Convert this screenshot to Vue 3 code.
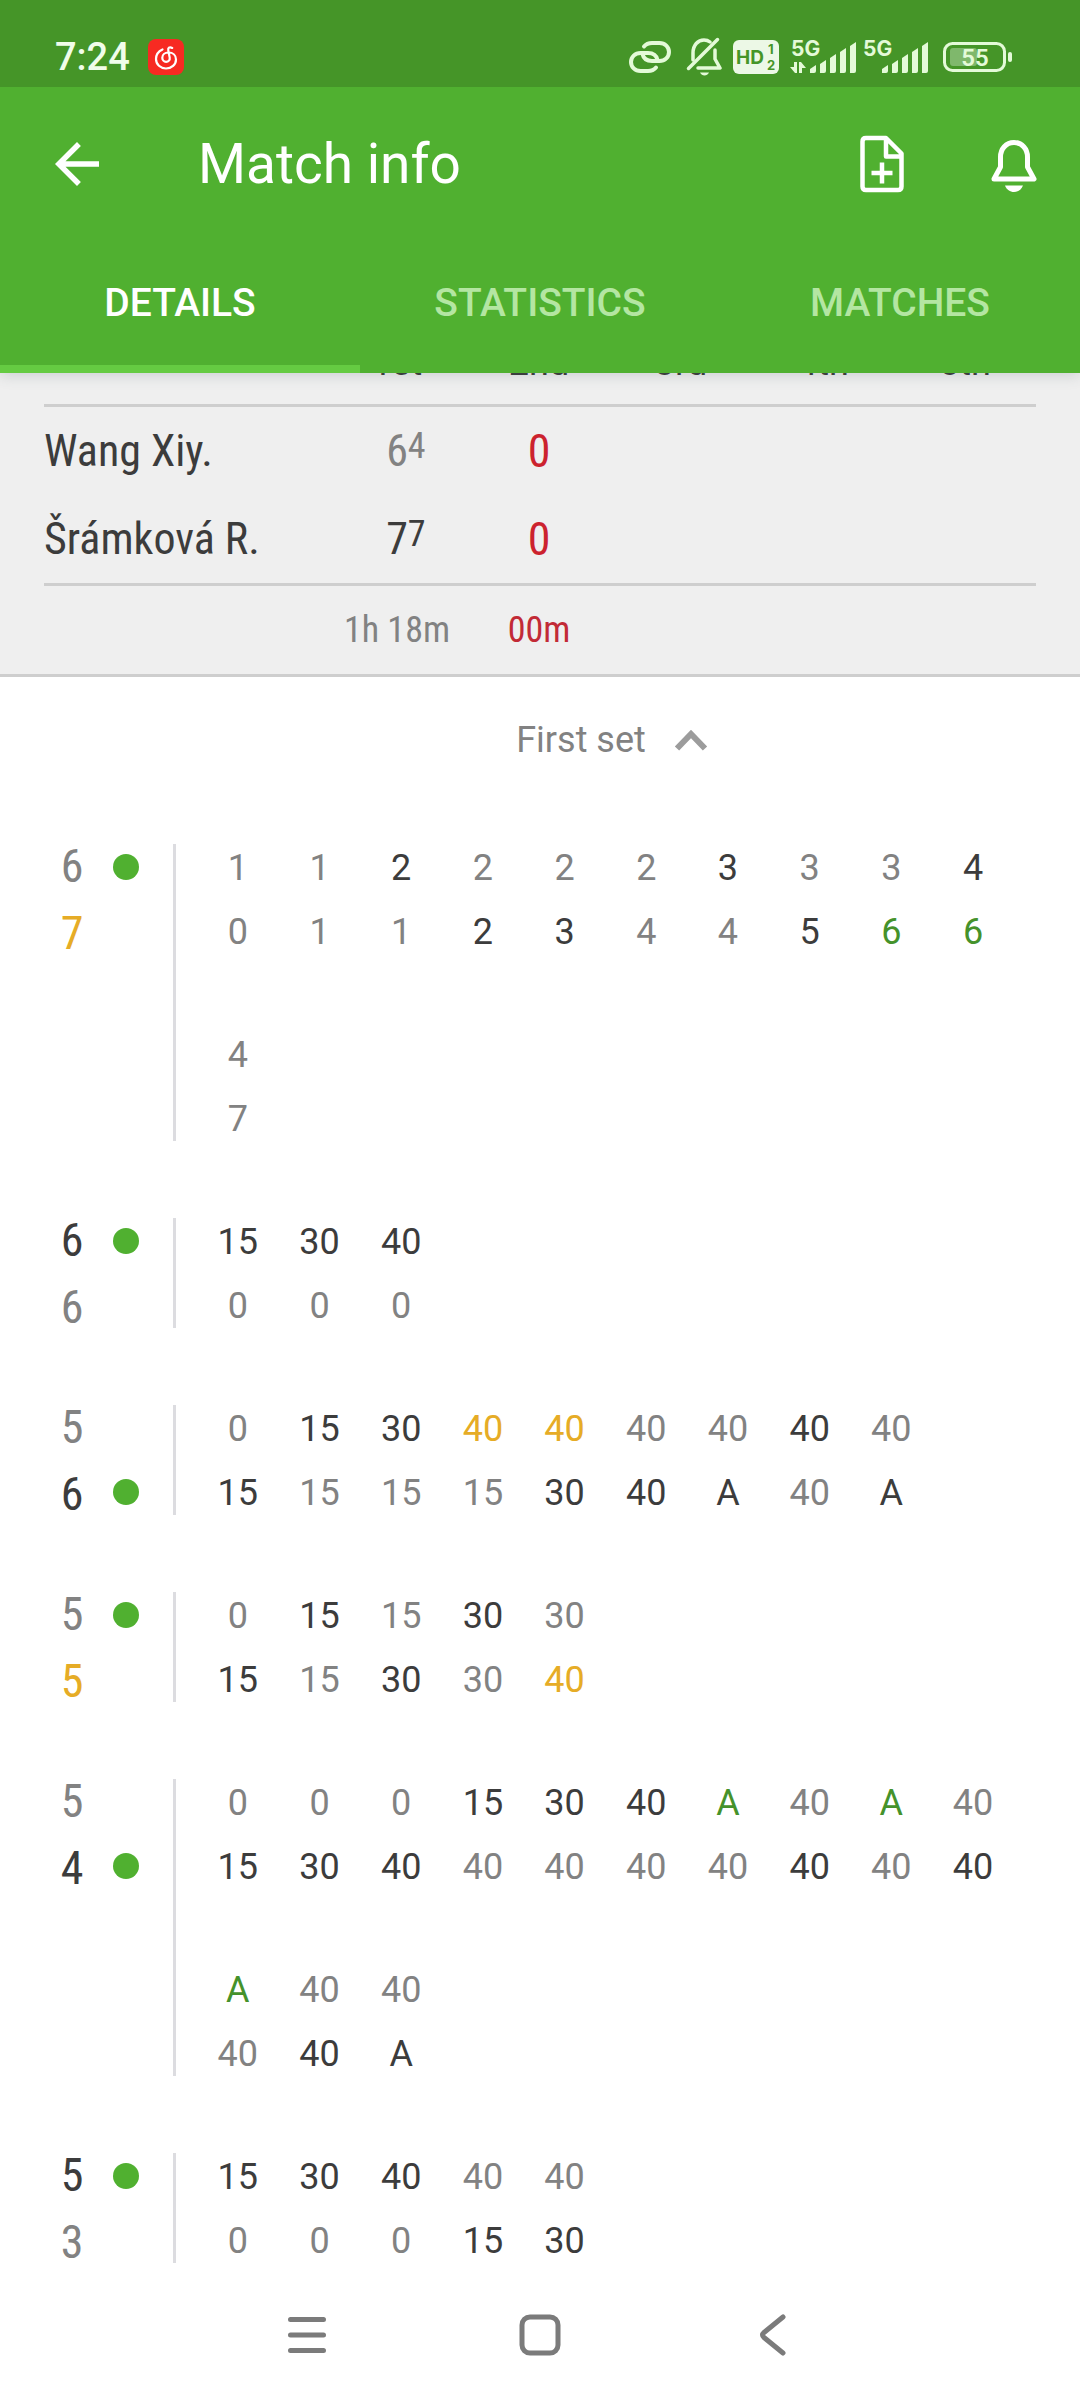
<script setup>
import { ref } from 'vue'

const tabs = ['DETAILS', 'STATISTICS', 'MATCHES']
const activeTab = ref('DETAILS')
const open = ref(true)

const sets = ['1st', '2nd', '3rd', '4th', '5th']
const players = [
  { name: 'Wang Xiy.', sets: [{ v: '6', tie: '4', tone: 'grey' }, { v: '0', tone: 'live' }] },
  { name: 'Šrámková R.', sets: [{ v: '7', tie: '7', tone: 'dark' }, { v: '0', tone: 'live' }] },
]

// Point suffixes: * won point, y break point, g set point
const source = [
  { score: ['6', '7y'], serve: 0, rows: [['1 1 2* 2 2 2 3* 3 3 4*', '0 1 1 2* 3* 4 4 5* 6g 6g'], ['4', '7']] },
  { score: ['6*', '6'], serve: 0, rows: [['15* 30* 40*', '0 0 0']] },
  { score: ['5', '6*'], serve: 1, rows: [['0 15* 30* 40y 40y 40 40 40* 40', '15* 15 15 15 30* 40* A* 40 A*']] },
  { score: ['5', '5y'], serve: 0, rows: [['0 15* 15 30* 30', '15* 15 30* 30 40y']] },
  { score: ['5', '4*'], serve: 1, rows: [['0 0 0 15* 30* 40* Ag 40 Ag 40', '15* 30* 40* 40 40 40 40 40* 40 40*'], ['Ag 40 40', '40 40* A*']] },
  { score: ['5*', '3'], serve: 0, rows: [['15* 30* 40* 40 40', '0 0 0 15* 30*']] },
]
const tones = { '*': 'dark', y: 'amber', g: 'green' }
const parse = (s) => ({ v: s.replace(/[*yg]/, ''), tone: tones[s.slice(-1)] || 'grey' })
const games = source.map((g) => ({
  serve: g.serve,
  score: g.score.map(parse),
  rows: g.rows.map((pair) => pair.map((line) => {
    const cells = line.split(' ').map(parse)
    while (cells.length < 10) cells.push({ v: '', tone: 'grey' })
    return cells
  })),
}))
</script>

<template>
  <div class="screen">
    <header class="top">
      <div class="status">
        <span class="clock">7:24</span>
        <svg class="music" viewBox="0 0 36 36" width="36" height="36">
          <rect width="36" height="36" rx="8" fill="#f72a22" />
          <path
            d="M14.500 10.500C10 12.500 8 16 8 20c0 5.500 4.500 9.500 10 9.500S28 25.500 28 20.500c0-4-3-7-7.500-7-3.800 0-6.200 2.200-6.200 5.200 0 2.300 1.600 4.100 3.800 4.100 2.400 0 4-1.800 3.600-4.200L20.300 11.500c-.5-2.500 1-4 3.900-2.600"
            fill="none" stroke="#fff" stroke-width="2.200" stroke-linecap="round"
          />
        </svg>
        <span class="grow"></span>
        <svg class="s-link" viewBox="0 0 42 34" width="42" height="34" fill="none" stroke="#e4fad8" stroke-width="4" stroke-linecap="round">
          <path d="M15 6.500c2-2.500 5-3.500 8-3.500h7.500c5.500 0 9.500 4 9.500 9s-4 9-9.500 9H23c-5 0-8.500-2.500-9.500-7" />
          <path d="M27 27.500c-2 2.500-5 3.500-8 3.500h-7.500C6 31 2 27 2 22s4-9 9.500-9H19c5 0 8.500 2.500 9.500 7" />
        </svg>
        <svg class="s-bell" viewBox="0 0 36 40" width="36" height="40" fill="none" stroke="#e4fad8" stroke-width="3.500" stroke-linejoin="round" stroke-linecap="round">
          <path d="M7 23V16C7 8 12 3 18 3c2.500 0 4.500.8 6 2M29 13v9l5 9H12" />
          <path d="M2.500 31.500L31.500 2.500" />
          <path d="M14 35.500h9c-1 2-2.500 3-4.500 3s-3.500-1-4.500-3z" fill="#e4fad8" stroke="none" />
        </svg>
        <svg class="s-hd" viewBox="0 0 46 34" width="46" height="34">
          <rect width="46" height="34" rx="6" fill="#ecf8e6" />
          <g fill="#459528" font-family="Inter, sans-serif" font-weight="700">
            <text x="3" y="24" font-size="19">HD</text>
            <text x="35" y="14" font-size="13">1</text>
            <text x="34" y="30" font-size="13">2</text>
          </g>
        </svg>
        <svg v-for="n in 2" :key="n" class="s-signal" :class="{ second: n === 2 }" viewBox="0 0 68 44" width="68" height="44" fill="#e4fad8">
          <text x="1" y="21" font-size="21" font-family="Inter, sans-serif" font-weight="700">5G</text>
          <path v-if="n === 1" d="M4 27h3v11H5L0 32h4zM9 38V27h2l5 6h-4v5z" />
          <path d="M20 38v-4l6-4v6q0 2-2 2zM30 38v-9l6-4v11q0 2-2 2zM40 38V23l6-4v17q0 2-2 2zM50 38V17l6-4v23q0 2-2 2zM60 38V11l6-4v29q0 2-2 2z" />
        </svg>
        <svg class="s-battery" viewBox="0 0 70 32" width="70" height="32">
          <rect x="1.500" y="2.500" width="60" height="27" rx="8" fill="none" stroke="#e4fad8" stroke-width="3" />
          <rect x="7" y="7" width="27" height="18" rx="3" fill="#7fb86c" />
          <rect x="65" y="11" width="4" height="10" rx="2" fill="#e4fad8" />
          <text x="32" y="25" text-anchor="middle" font-size="24" font-weight="600" font-family="Roboto, sans-serif" fill="#e4fad8">55</text>
        </svg>
      </div>

      <div class="bar">
        <button class="icon" aria-label="Back">
          <svg viewBox="0 0 24 24" width="66" height="66" fill="#fff"><path d="M20 11H7.830l5.590-5.590L12 4l-8 8 8 8 1.410-1.410L7.830 13H20v-2z" /></svg>
        </button>
        <h1>Match info</h1>
        <button class="icon" aria-label="Add note">
          <svg viewBox="0 0 66 66" width="66" height="66" fill="none" stroke="#fff" stroke-width="4.500" stroke-linejoin="round">
            <path d="M37 7H17q-3.500 0-3.500 3.500v45q0 3.500 3.500 3.500h32q3.500 0 3.500-3.500V22.500zM37 8v17.500h15M33 31.500v21M22.500 42h21" />
          </svg>
        </button>
        <button class="icon" aria-label="Notifications">
          <svg viewBox="0 0 66 66" width="66" height="66" fill="none" stroke="#fff" stroke-width="5">
            <path d="M13 48l6.500-12V26c0-8 5.500-14.500 13.500-14.500S46.500 18 46.500 26v10L53 48z" stroke-linejoin="round" />
            <path d="M24 54.500h18c-1.500 4-5 6.500-9 6.500s-7.500-2.500-9-6.500z" fill="#fff" stroke="none" />
          </svg>
        </button>
      </div>

      <nav class="tabs">
        <button v-for="t in tabs" :key="t" :class="{ active: t === activeTab }" @click="activeTab = t">{{ t }}</button>
      </nav>
    </header>

    <section class="board">
      <table>
        <thead>
          <tr><th class="name"></th><th v-for="s in sets" :key="s">{{ s }}</th></tr>
        </thead>
        <tbody>
          <tr v-for="p in players" :key="p.name">
            <td class="name">{{ p.name }}</td>
            <td v-for="(s, i) in sets" :key="s" :class="p.sets[i]?.tone">{{ p.sets[i]?.v }}<sup v-if="p.sets[i]?.tie">{{ p.sets[i].tie }}</sup></td>
          </tr>
        </tbody>
        <tfoot>
          <tr><td class="name"></td><td class="grey">1h 18m</td><td class="red">00m</td><td></td><td></td><td></td></tr>
        </tfoot>
      </table>
    </section>

    <main>
      <button class="toggle" :aria-expanded="open" @click="open = !open">
        First set
        <svg viewBox="0 0 34 22" width="34" height="22" fill="none" stroke="#9c9c9c" stroke-width="6"><path d="M3 19.500L17 5l14 14.500" /></svg>
      </button>

      <div v-if="open" class="games">
        <article v-for="(g, i) in games" :key="i" class="game">
          <div class="score">
            <span v-for="(s, k) in g.score" :key="k" :class="s.tone">{{ s.v }}</span>
          </div>
          <div class="serve">
            <i v-for="k in 2" :key="k" :class="{ on: g.serve === k - 1 }"></i>
          </div>
          <div class="points">
            <table v-for="(pair, r) in g.rows" :key="r">
              <tbody>
                <tr v-for="(line, k) in pair" :key="k">
                  <td v-for="(c, n) in line" :key="n" :class="c.tone">{{ c.v }}</td>
                </tr>
              </tbody>
            </table>
          </div>
        </article>
      </div>
    </main>

    <nav class="system">
      <button aria-label="Recent apps">
        <svg viewBox="0 0 48 48" width="48" height="48" fill="none" stroke="#7b7b7b" stroke-width="5" stroke-linecap="round"><path d="M7.500 8.500h33M7.500 24h33M7.500 39.500h33" /></svg>
      </button>
      <button aria-label="Home">
        <svg viewBox="0 0 48 48" width="48" height="48" fill="none" stroke="#7b7b7b" stroke-width="5"><rect x="6" y="6" width="36" height="36" rx="8" /></svg>
      </button>
      <button aria-label="Back">
        <svg viewBox="0 0 48 48" width="48" height="48" fill="none" stroke="#7b7b7b" stroke-width="5" stroke-linecap="round"><path d="M34 6L15 21.500q-3 2.500 0 5L34 42" /></svg>
      </button>
    </nav>
  </div>
</template>

<style>
body {
  background: #fff;
}
</style>

<style scoped>
.screen {
  display: flex;
  flex-direction: column;
  min-height: 100vh;
  font-family: Roboto, sans-serif;
  font-size: 36px;
  background: #fff;
  color: #3c3c3c;
}
button {
  padding: 0;
  border: 0;
  background: none;
  font: inherit;
  color: inherit;
}
svg {
  display: block;
  flex: none;
}
.top {
  position: relative;
  z-index: 1;
  background: #50b030;
  color: #fff;
  box-shadow: 0 2px 14px rgba(60, 80, 90, 0.2);
}
.status {
  display: flex;
  align-items: center;
  height: 60px;
  padding: 27px 67px 0 55px;
  background: #459528;
}
.clock {
  font-size: 38px;
  font-weight: 500;
  color: #f0fdea;
}
.music {
  margin-left: 18px;
}
.grow {
  flex: 1;
}
.s-bell {
  margin-left: 15px;
}
.s-battery {
  margin-left: 13px;
}
.s-hd {
  margin-left: 11px;
}
.s-signal {
  margin-left: 11px;
}
.s-signal.second {
  margin-left: 4px;
}
.bar {
  display: flex;
  align-items: center;
  height: 154px;
  padding: 0 33px 0 44px;
}
.icon + .icon {
  margin-left: 66px;
}
h1 {
  flex: 1;
  margin: 0 0 0 88px;
  font-size: 55px;
  font-weight: 400;
}
.tabs {
  display: flex;
}
.tabs button {
  flex: 1;
  height: 132px;
  border-bottom: 8px solid transparent;
  font-size: 39px;
  font-weight: 500;
  color: #b4e6a2;
}
.tabs .active {
  color: #fff;
  border-color: #65cb42;
}

/* The scoreboard is scrolled so that its heading row lies under the app bar. */
.board {
  margin-top: -57px;
  padding: 0 44px;
  background: #efefef;
  border-bottom: 3px solid #cecece;
}
table {
  width: 100%;
  table-layout: fixed;
  border-spacing: 0;
}
td,
th {
  padding: 0;
  font-weight: 400;
  text-align: center;
}
.board td {
  line-height: 88px;
}
.board th {
  padding-top: 6px;
  line-height: 82px;
}
.board td,
.score {
  font-family: "Roboto Condensed", "Liberation Sans Narrow", Roboto, sans-serif;
}
.board tbody {
  font-size: 44px;
}
.board th,
.board tbody tr:last-child td {
  border-bottom: 3px solid #cecece;
}
.board .name {
  width: 282px;
  text-align: left;
}
sup {
  display: inline-block;
  width: 0;
  font-size: 36px;
  line-height: 0;
  vertical-align: 8px;
}
.grey {
  color: #828282;
}
.dark {
  color: #3c3c3c;
}
.amber {
  color: #e6ac26;
}
.green {
  color: #45922b;
}
.red {
  color: #c22a36;
}
.live {
  font-size: 46px;
  color: #cc222e;
}

.toggle {
  display: flex;
  align-items: center;
  justify-content: center;
  gap: 28px;
  width: 100%;
  height: 126px;
  padding-left: 144px;
  color: #828282;
}
.games {
  display: flex;
  flex-direction: column;
  gap: 77px;
  padding-top: 41px;
}
.game {
  display: flex;
}
.score {
  display: flex;
  flex-direction: column;
  gap: 25px;
  width: 54px;
  margin-left: 45px;
  padding-top: 1px;
  font-size: 46px;
  line-height: 42px;
  text-align: center;
}
.serve {
  display: flex;
  flex-direction: column;
  align-items: center;
  gap: 38px;
  box-sizing: border-box;
  width: 74px;
  padding: 10px 20px 0 0;
}
.serve i {
  width: 26px;
  height: 26px;
  border-radius: 50%;
}
.serve .on {
  background: #50b030;
}
.points {
  flex: 1;
  display: flex;
  flex-direction: column;
  gap: 77px;
  padding: 0 66px 0 21px;
  border-left: 3px solid #dcdce0;
}
.points td {
  padding-top: 2px;
  line-height: 44px;
}
.points tr + tr td {
  padding-top: 20px;
}
.system {
  display: flex;
  justify-content: center;
  margin-top: auto;
}
.system button {
  display: flex;
  justify-content: center;
  align-items: center;
  width: 233px;
  height: 130px;
}
</style>
